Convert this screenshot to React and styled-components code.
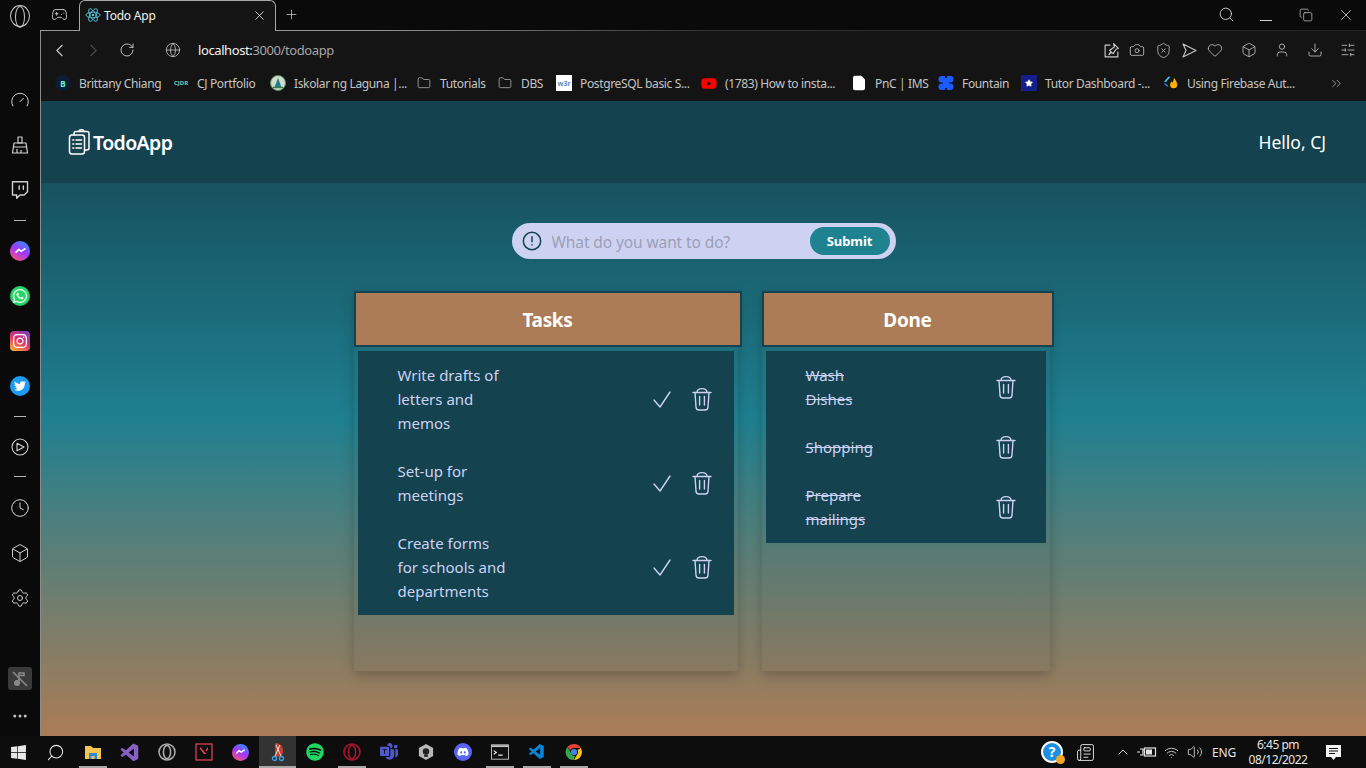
import React from 'react';
import styled, { createGlobalStyle } from 'styled-components';
import {
  ChevronLeft, ChevronRight, ChevronUp, ChevronsRight, RotateCw, Globe, Search, Copy, X, Plus,
  Gamepad2, Folder, Camera, ShieldX, Heart, Box, User, Download, SlidersHorizontal, Gauge, Twitch,
  Clock, Settings, Ellipsis, Volume2, Wifi, Newspaper, FileText,
} from 'lucide-react';
import { FaWhatsapp, FaTwitter, FaInstagram, FaWindows, FaDiscord, FaSpotify, FaYoutube, FaStar } from 'react-icons/fa';
import { BiLogoVisualStudio } from 'react-icons/bi';
import { VscVscode } from 'react-icons/vsc';
import { BsMicrosoftTeams } from 'react-icons/bs';

const GlobalStyle = createGlobalStyle`
  html, body { margin: 0; padding: 0; background: #0a0a0a; }
  * { box-sizing: border-box; }
  body { font-family: "Noto Sans", "Open Sans", sans-serif; overflow: hidden; }
`;

const Window = styled.div`
  width: 1366px;
  height: 768px;
  display: flex;
  flex-direction: column;
  overflow: hidden;
`;

const Workspace = styled.div`
  display: flex;
  flex: 1;
  min-height: 0;
`;

/* opera sidebar */
const Sidebar = styled.aside`
  width: 40px;
  flex: none;
  background: #0a0a0a;
  color: #d0d0d0;
  display: flex;
  flex-direction: column;
  align-items: center;
  padding: 5px 0 11px;
`;

const OperaMark = styled.div`
  width: 20px;
  height: 22px;
  border: 1.5px solid #c9c9c9;
  border-radius: 50%;
  margin-bottom: 50px;
  display: flex;
  justify-content: center;
  &::after {
    content: '';
    width: 8px;
    height: 100%;
    border: 1.5px solid #c9c9c9;
    border-radius: 50%;
  }
`;

const SideSlot = styled.div`
  width: 40px;
  height: 45px;
  flex: none;
  display: flex;
  align-items: center;
  justify-content: center;
`;

const SideDash = styled.div`
  width: 12px;
  height: 1px;
  background: #b5b5b5;
  margin: ${p => p.$top}px 0 ${p => p.$bottom}px;
  flex: none;
`;

const Badge = styled.div`
  width: ${p => p.$size || 20}px;
  height: ${p => p.$size || 20}px;
  border-radius: ${p => p.$radius || '50%'};
  background: ${p => p.$bg};
  color: #fff;
  display: flex;
  align-items: center;
  justify-content: center;
`;

const MuteTile = styled.div`
  width: 24px;
  height: 23px;
  margin-top: auto;
  margin-bottom: 17px;
  border-radius: 3px;
  background: #3a3a3a;
  color: #8a8a8a;
  display: flex;
  align-items: center;
  justify-content: center;
`;

const Browser = styled.div`
  flex: 1;
  min-width: 0;
  display: flex;
  flex-direction: column;
`;

const TabStrip = styled.div`
  height: 31px;
  flex: none;
  display: flex;
  align-items: stretch;
  background: #0a0a0a;
  color: #d0d0d0;
  border-bottom: 1px solid;
  border-image: linear-gradient(90deg, #999 0, #999 24%, #333 50%, #222 100%) 1;
`;

const StripButton = styled.div`
  width: ${p => p.$w || 40}px;
  flex: none;
  display: flex;
  align-items: center;
  justify-content: center;
  padding-bottom: 1px;
  margin-left: ${p => (p.$push ? 'auto' : 0)};
`;

const MinimizeLine = styled.span`
  width: 12px;
  height: 1px;
  margin-top: 11px;
  background: currentColor;
`;

const Tab = styled.div`
  width: 197px;
  height: 31px;
  flex: none;
  display: flex;
  align-items: center;
  padding: 0 8px 2px 5px;
  gap: 3px;
  background: #141414;
  border: 1px solid #a8a8a8;
  border-bottom: none;
  border-radius: 6px 6px 0 0;
  color: #f0f0f0;
  font-size: 12px;
  letter-spacing: -0.2px;
`;

const TabTitle = styled.span`
  flex: 1;
`;

const Body = styled.div`
  flex: 1;
  min-height: 0;
  display: flex;
  flex-direction: column;
  border-left: 1px solid #8c8c8c;
`;

const Toolbar = styled.div`
  height: 39px;
  flex: none;
  background: #141414;
  color: #c8c8c8;
  display: flex;
  align-items: center;
  padding: 0 2px 1px 1px;
`;

const ToolButton = styled.div`
  width: ${p => p.$w || 34}px;
  height: 34px;
  flex: none;
  display: flex;
  align-items: center;
  justify-content: center;
  color: ${p => (p.$dim ? '#4a4a4a' : 'inherit')};
  margin-left: ${p => p.$left || 0}px;
`;

const Address = styled.div`
  margin-left: 8px;
  padding-bottom: 1px;
  flex: 1;
  font-size: 13px;
  letter-spacing: -0.4px;
  color: #a6a6a6;
  b { font-weight: 400; color: #f2f2f2; }
`;

const Bookmarks = styled.div`
  height: 31px;
  flex: none;
  background: #141414;
  display: flex;
  align-items: center;
  gap: 13px;
  padding: 0 0 5px 14px;
  color: #c4c4c4;
`;

const Bookmark = styled.div`
  display: flex;
  align-items: center;
  gap: 8px;
  flex: none;
`;

const BookmarkIcon = styled.div`
  width: 16px;
  height: 16px;
  flex: none;
  display: flex;
  align-items: center;
  justify-content: center;
  color: ${p => p.$color || 'inherit'};
  background: ${p => p.$bg || 'none'};
  border-radius: ${p => p.$radius || 0};
  font-size: ${p => p.$font || 9}px;
  font-weight: 700;
`;

const BookmarkLabel = styled.span`
  width: ${p => p.$w}px;
  font-size: 12px;
  letter-spacing: -0.35px;
  white-space: nowrap;
`;

const BookmarkMore = styled.div`
  margin-left: auto;
  margin-right: 22px;
  display: flex;
  color: #bdbdbd;
`;

/* the todo page */
const Page = styled.main`
  flex: 1;
  min-height: 0;
  display: flex;
  flex-direction: column;
  background: linear-gradient(180deg, #14424f 0%, #1f8090 50%, #ab7c55 100%);
  color: #cdd2f3;
`;

const Nav = styled.nav`
  height: 82px;
  flex: none;
  background: #14424f;
  color: #fff;
  display: flex;
  align-items: center;
  justify-content: space-between;
  padding: 0 40px 0 27px;
`;

const Brand = styled.div`
  display: flex;
  align-items: center;
  font-size: 19.5px;
  font-weight: 600;
  letter-spacing: -0.6px;
`;

const Greeting = styled.div`
  font-size: 17.5px;
`;

const Content = styled.div`
  display: flex;
  flex-direction: column;
  align-items: center;
  padding-top: 40px;
  gap: 32px;
`;

const TodoForm = styled.form`
  width: 384px;
  height: 36px;
  border-radius: 18px;
  background: #cdd2f3;
  display: flex;
  align-items: center;
  padding: 0 6px 0 10px;
  color: #14424f;
`;

const TodoInput = styled.input`
  flex: 1;
  min-width: 0;
  margin: 1px 0 0 10px;
  border: none;
  outline: none;
  background: none;
  font: inherit;
  font-size: 15.5px;
  letter-spacing: -0.1px;
  padding: 0;
  &::placeholder { color: #9c9fb6; opacity: 1; }
`;

const SubmitButton = styled.button`
  width: 80px;
  height: 28px;
  border: none;
  border-radius: 14px;
  background: #1f8290;
  color: #fff;
  font: inherit;
  font-size: 13px;
  font-weight: 700;
  letter-spacing: -0.1px;
  padding: 0;
`;

const Board = styled.div`
  display: flex;
  gap: 24px;
  padding-right: 4px;
`;

const Column = styled.section`
  width: ${p => p.$w}px;
  height: 380px;
  flex: none;
  background: rgba(70, 70, 70, 0.06);
  box-shadow: 0 4px 12px rgba(0, 0, 0, 0.22);
`;

const ColumnTitle = styled.h2`
  width: ${p => p.$w + 4}px;
  height: 56px;
  margin: 0 0 4px;
  padding-top: 2px;
  background: #ab7c55;
  border: 2px solid #14424f;
  color: #fff;
  font-size: 19px;
  font-weight: 700;
  letter-spacing: -0.3px;
  display: flex;
  align-items: center;
  justify-content: center;
`;

const TodoList = styled.ul`
  list-style: none;
  margin: 0 4px;
  padding: 12px 0;
  background: #14424f;
  display: flex;
  flex-direction: column;
  gap: 24px;
`;

const TodoRow = styled.li`
  display: flex;
  align-items: center;
  padding: 0 ${p => p.$right}px 0 40px;
`;

const TodoText = styled.span`
  width: ${p => p.$w}px;
  flex: none;
  font-size: 15px;
  line-height: 24px;
  text-decoration: ${p => (p.$done ? 'line-through' : 'none')};
`;

const TodoActions = styled.div`
  margin-left: auto;
  display: flex;
  gap: 16px;
`;

/* windows taskbar */
const Taskbar = styled.footer`
  height: 32px;
  flex: none;
  background: #0d0d0d;
  display: flex;
  align-items: stretch;
  color: #e8e8e8;
`;

const TaskSlot = styled.div`
  width: 37px;
  flex: none;
  display: flex;
  align-items: center;
  justify-content: center;
  position: relative;
  background: ${p => (p.$active ? '#333' : 'none')};
  &::after {
    content: '';
    display: ${p => (p.$open ? 'block' : 'none')};
    position: absolute;
    bottom: 0;
    left: ${p => (p.$active ? 0 : 5)}px;
    right: ${p => (p.$active ? 0 : 4)}px;
    height: 2px;
    background: #a8a8a8;
  }
`;

const Tray = styled.div`
  margin-left: auto;
  display: flex;
  align-items: center;
  font-size: 12px;
  color: #e4e4e4;
`;

const TraySlot = styled.div`
  width: ${p => p.$w || 24}px;
  flex: none;
  display: flex;
  align-items: center;
  justify-content: center;
  margin-left: ${p => p.$left || 0}px;
`;

const HelpBadge = styled.div`
  width: 22px;
  height: 22px;
  position: relative;
  border-radius: 50%;
  border: 2px solid #fff;
  background: #1d8fe0;
  color: #fff;
  font-size: 14px;
  font-weight: 700;
  line-height: 18px;
  text-align: center;
`;

const HelpDot = styled.span`
  position: absolute;
  right: -4px;
  bottom: -3px;
  width: 9px;
  height: 9px;
  border-radius: 50%;
  background: #f5a623;
`;

const TrayClock = styled.div`
  width: 78px;
  text-align: center;
  line-height: 15px;
  letter-spacing: -0.5px;
`;

const TrayLang = styled.div`
  width: 30px;
  margin-left: 2px;
  text-align: center;
  letter-spacing: -0.2px;
`;

// drawings that the icon packages don't have

const TrashIcon = () => (
  <svg width="24" height="24" viewBox="0 0 24 24" fill="none" stroke="currentColor" strokeWidth="1.4" strokeLinecap="round" strokeLinejoin="round">
    <path d="M3 5.5h18" />
    <path d="M7 5.5C7 2.8 9 1.6 12 1.6s5 1.2 5 3.9" />
    <path d="M5 5.5l1 14.5a3 3 0 0 0 3 3h6a3 3 0 0 0 3-3l1-14.5" />
    <path d="M9.6 9.5v8.5M14.4 9.5v8.5" />
  </svg>
);

const CheckIcon = () => (
  <svg width="24" height="24" viewBox="0 0 24 24" fill="none" stroke="currentColor" strokeWidth="1.4" strokeLinecap="round" strokeLinejoin="round">
    <path d="M4 13l6 7L20 5" />
  </svg>
);

const LogoIcon = () => (
  <svg width="25" height="26" viewBox="0 0 25 26" fill="none" stroke="#fff" strokeWidth="1.5" strokeLinecap="round" strokeLinejoin="round">
    <rect x="1.5" y="6" width="15" height="19" rx="2.5" />
    <path d="M6 6V4.5a2 2 0 0 1 2-2h11a2 2 0 0 1 2 2V19a2 2 0 0 1-2 2h-2.5" />
    <path d="M11 2.5a2.5 1.8 0 0 1 5 0" />
    <path d="M4.8 11h1M8 11h5.5M4.8 15h1M8 15h5.5M4.8 19h1M8 19h5.5" />
  </svg>
);

const AlertIcon = () => (
  <svg width="20" height="20" viewBox="0 0 20 20" fill="none" stroke="currentColor" strokeWidth="1.5" strokeLinecap="round">
    <circle cx="10" cy="10" r="8.7" />
    <path d="M10 5.8v5" />
    <path d="M10 13.8v.2" />
  </svg>
);

const Bolt = ({ size = 12 }) => (
  <svg width={size} height={size} viewBox="0 0 12 12" fill="none" stroke="#fff" strokeWidth="1.6" strokeLinejoin="round">
    <path d="M1.5 8l3-3 2.2 1.8L10.5 4" />
  </svg>
);

const Messenger = ({ size = 20 }) => (
  <Badge $size={size} $bg="linear-gradient(30deg, #ff5a6e 5%, #a334fa 50%, #1e9bff 95%)">
    <Bolt size={size * 0.65} />
  </Badge>
);

const PlayerIcon = () => (
  <svg width="18" height="18" viewBox="0 0 18 18" fill="none" stroke="currentColor" strokeWidth="1.1" strokeLinejoin="round">
    <circle cx="9" cy="9" r="8" />
    <path d="M6 5.2l7 3.8-7 3.8z" />
  </svg>
);

const BrushIcon = () => (
  <svg width="18" height="20" viewBox="0 0 18 20" fill="none" stroke="currentColor" strokeWidth="1.2" strokeLinejoin="round">
    <path d="M7 2h4v6H7z" />
    <path d="M3 8h12l1.5 10h-15z" />
    <path d="M2 12h14M6 14v4M10 15v3" />
  </svg>
);

const MutedIcon = () => (
  <svg width="18" height="18" viewBox="0 0 18 18" fill="currentColor" stroke="currentColor">
    <circle cx="6" cy="13" r="3" stroke="none" />
    <path d="M8 13V3h5v2.5H9" fill="none" strokeWidth="1.6" />
    <path d="M2 2l14 14" strokeWidth="1.6" />
  </svg>
);

const PinBoxIcon = () => (
  <svg width="17" height="17" viewBox="0 0 16 16" fill="none" stroke="currentColor" strokeWidth="1.1" strokeLinejoin="round">
    <path d="M7 3H2v11h12V9" />
    <path d="M10 1.5l4.5 4.5-2 .6L9.5 11 8.2 9.8 5.5 12l2-3-1.2-1.2 4.4-3z" />
  </svg>
);

const SendIcon = () => (
  <svg width="17" height="17" viewBox="0 0 17 17" fill="none" stroke="currentColor" strokeWidth="1.1" strokeLinejoin="round">
    <path d="M2 2l13 6.5L2 15l3-6.5z" />
  </svg>
);

const FountainIcon = () => (
  <svg width="16" height="16" viewBox="0 0 16 16" fill="#1a5cff">
    <rect x="0.5" y="1" width="15" height="6.5" rx="3.2" />
    <rect x="0.5" y="8.5" width="15" height="6.5" rx="3.2" />
    <path d="M5 6h6v4H5z" />
    <path d="M7 0.5h2v2.5H7zM7 13h2v2.5H7z" fill="#141414" />
  </svg>
);

const FirebaseIcon = () => (
  <svg width="18" height="16" viewBox="0 0 18 16">
    <path d="M6 1h2.4L3.4 7 1 7z" fill="#40c4ff" />
    <path d="M1 8.5h2.4l3 3.5H4z" fill="#2a7fd6" />
    <path d="M12.5 2c1 2.5 3.5 4 3.5 8a4 4 0 0 1-8 0c0-2 1-3 2-4 .3 1 .6 1.5 1 1.7.5-2 .8-3.7 1.5-5.7z" fill="#ffb300" />
  </svg>
);

const SealIcon = () => (
  <svg width="16" height="16" viewBox="0 0 16 16">
    <circle cx="8" cy="8" r="7.5" fill="#cfdccb" stroke="#5d8c66" />
    <path d="M8 3l3.4 9H4.6z" fill="#1f7f8c" />
    <path d="M3 12.5h10" stroke="#3d7a4a" strokeWidth="1.4" />
  </svg>
);

const Chrome = () => (
  <svg width="18" height="18" viewBox="0 0 18 18">
    <path d="M9 1a8 8 0 0 1 6.9 4H9a4 4 0 0 0-3.7 2.4L2.4 4A8 8 0 0 1 9 1z" fill="#e34133" />
    <path d="M15.9 5A8 8 0 0 1 9 17l3.4-6A4 4 0 0 0 12.5 7z" fill="#fbc116" />
    <path d="M2.4 4l3.5 6A4 4 0 0 0 10 12.9L8.6 17A8 8 0 0 1 2.4 4z" fill="#2fa84f" />
    <circle cx="9" cy="9" r="3.1" fill="#3f86f4" />
  </svg>
);

const FolderYellow = () => (
  <svg width="18" height="17" viewBox="0 0 18 17">
    <path d="M1 2h6l2 2h8v11H1z" fill="#f4c64f" />
    <path d="M5 9h8v6h-2.5v-3h-3v3H5z" fill="#2f88d8" />
  </svg>
);

const Snip = () => (
  <svg width="16" height="20" viewBox="0 0 16 20" fill="none">
    <path d="M5 1c5 0 8 3 8 8s-3 6-8 6z" fill="#c9402d" />
    <path d="M6 3l5 11M10 3L5 14" stroke="#e8e8e8" strokeWidth="1" />
    <circle cx="4.5" cy="16.5" r="2" stroke="#3aa3e8" strokeWidth="1.3" />
    <circle cx="11.5" cy="16.5" r="2" stroke="#3aa3e8" strokeWidth="1.3" />
  </svg>
);

const Valorant = () => (
  <svg width="18" height="18" viewBox="0 0 18 18" fill="none">
    <rect x="1" y="1" width="16" height="16" stroke="#e8455a" strokeWidth="1.2" />
    <path d="M5 6l4 5h2.5L5 4zM13 4l-2.5 3.4 1 1L13 6.5z" fill="#e8455a" />
  </svg>
);

const CubeLogo = () => (
  <svg width="16" height="18" viewBox="0 0 18 20">
    <path d="M9 1l8 4.5v9L9 19l-8-4.5v-9z" fill="#b8b8b8" />
    <circle cx="9" cy="9.5" r="3.6" fill="#222" />
    <path d="M7 13h4v2.5H7z" fill="#222" />
  </svg>
);

const Cmd = () => (
  <svg width="18" height="16" viewBox="0 0 20 17" fill="none">
    <rect x="0.5" y="0.5" width="19" height="16" fill="#111" stroke="#c8c8c8" />
    <path d="M1 1h18v2H1z" fill="#c8c8c8" />
    <path d="M3 7l3 2-3 2M8 12h5" stroke="#e8e8e8" strokeWidth="1.2" />
  </svg>
);

const Notice = () => (
  <svg width="17" height="17" viewBox="0 0 17 17">
    <path d="M1 1h15v12h-5l-2.5 3L6 13H1z" fill="#f2f2f2" />
    <path d="M4 4.5h9M4 7h9M4 9.5h6" stroke="#0d0d0d" strokeWidth="1" />
  </svg>
);

const Battery = () => (
  <svg width="20" height="14" viewBox="0 0 20 14" fill="none" stroke="#e4e4e4" strokeWidth="1.2">
    <path d="M0 7h3M3 4h3v6H3M6 5h1" />
    <rect x="7.5" y="3" width="11" height="8" />
    <rect x="9" y="4.5" width="6" height="5" fill="#e4e4e4" stroke="none" />
  </svg>
);

function OperaGlyph({ color }) {
  return (
    <svg width="18" height="18" viewBox="0 0 18 18" fill="none" stroke={color} strokeWidth="1.6">
      <ellipse cx="9" cy="9" rx="8" ry="8" />
      <ellipse cx="9" cy="9" rx="3.6" ry="6.6" />
    </svg>
  );
}

const tasks = ['Write drafts of letters and memos', 'Set-up for meetings', 'Create forms for schools and departments'];
const done = ['Wash Dishes', 'Shopping', 'Prepare mailings'];

const bookmarks = [
  { label: 'Brittany Chiang', w: 81, icon: <BookmarkIcon $bg="#0b1c33" $color="#64ffda" $radius="50%" $font={8}>B</BookmarkIcon> },
  { label: 'CJ Portfolio', w: 60, icon: <BookmarkIcon $color="#7fc8a9" $font={6}>CJDR</BookmarkIcon> },
  { label: 'Iskolar ng Laguna |...', w: 109, icon: <SealIcon /> },
  { label: 'Tutorials', w: 44, icon: <BookmarkIcon><Folder size={14} strokeWidth={1.2} /></BookmarkIcon> },
  { label: 'DBS', w: 22, icon: <BookmarkIcon><Folder size={14} strokeWidth={1.2} /></BookmarkIcon> },
  { label: 'PostgreSQL basic S...', w: 108, icon: <BookmarkIcon $bg="#fff" $color="#5a8fc4" $font={7}>w3r</BookmarkIcon> },
  { label: '(1783) How to insta...', w: 113, icon: <BookmarkIcon $color="#f00"><FaYoutube size={17} /></BookmarkIcon> },
  { label: 'PnC | IMS', w: 50, icon: <BookmarkIcon $color="#fff"><FileText size={16} fill="#fff" stroke="#fff" /></BookmarkIcon> },
  { label: 'Fountain', w: 46, icon: <FountainIcon /> },
  { label: 'Tutor Dashboard -...', w: 105, icon: <BookmarkIcon $bg="#14208a" $color="#fff"><FaStar size={8} /></BookmarkIcon> },
  { label: 'Using Firebase Aut...', w: 108, icon: <BookmarkIcon><FirebaseIcon /></BookmarkIcon> },
];

const taskApps = [
  { key: 'files', icon: <FolderYellow />, open: true },
  { key: 'vs', icon: <BiLogoVisualStudio size={21} color="#8661c5" /> },
  { key: 'opera', icon: <OperaGlyph color="#a8a8a8" /> },
  { key: 'valorant', icon: <Valorant /> },
  { key: 'messenger', icon: <Messenger size={17} /> },
  { key: 'snip', icon: <Snip />, open: true, active: true },
  { key: 'spotify', icon: <FaSpotify size={18} color="#1ed760" /> },
  { key: 'operagx', icon: <OperaGlyph color="#a3162f" />, open: true },
  { key: 'teams', icon: <BsMicrosoftTeams size={18} color="#5059c9" /> },
  { key: 'cube', icon: <CubeLogo /> },
  { key: 'discord', icon: <Badge $size={18} $bg="#5865f2"><FaDiscord size={12} /></Badge> },
  { key: 'cmd', icon: <Cmd />, open: true },
  { key: 'vscode', icon: <VscVscode size={18} color="#0a84d6" />, open: true },
  { key: 'chrome', icon: <Chrome />, open: true },
];

export default function App() {
  return (
    <Window>
      <GlobalStyle />
      <Workspace>
        <Sidebar>
          <OperaMark />
          <SideSlot><Gauge size={20} strokeWidth={1.2} /></SideSlot>
          <SideSlot><BrushIcon /></SideSlot>
          <SideSlot><Twitch size={20} strokeWidth={1.7} /></SideSlot>
          <SideDash $top={8} $bottom={7} />
          <SideSlot><Messenger /></SideSlot>
          <SideSlot><Badge $bg="#25d366"><FaWhatsapp size={16} /></Badge></SideSlot>
          <SideSlot><Badge $radius="4px" $bg="linear-gradient(30deg, #f9a13a 10%, #e1306c 50%, #7a3fc4 95%)"><FaInstagram size={16} /></Badge></SideSlot>
          <SideSlot><Badge $bg="#1d9bf0"><FaTwitter size={12} /></Badge></SideSlot>
          <SideDash $top={8} $bottom={7} />
          <SideSlot><PlayerIcon /></SideSlot>
          <SideDash $top={7} $bottom={8} />
          <SideSlot><Clock size={20} strokeWidth={1.2} /></SideSlot>
          <SideSlot><Box size={20} strokeWidth={1.2} /></SideSlot>
          <SideSlot><Settings size={20} strokeWidth={1.2} /></SideSlot>
          <MuteTile><MutedIcon /></MuteTile>
          <Ellipsis size={18} color="#bdbdbd" />
        </Sidebar>

        <Browser>
          <TabStrip>
            <StripButton $w={39}><Gamepad2 size={17} strokeWidth={1.3} /></StripButton>
            <Tab>
              <svg width="16" height="16" viewBox="0 0 18 18" fill="none" stroke="#58c4dc" strokeWidth="1">
                <ellipse cx="9" cy="9" rx="8" ry="3.2" />
                <ellipse cx="9" cy="9" rx="8" ry="3.2" transform="rotate(60 9 9)" />
                <ellipse cx="9" cy="9" rx="8" ry="3.2" transform="rotate(120 9 9)" />
                <circle cx="9" cy="9" r="1.4" fill="#58c4dc" stroke="none" />
              </svg>
              <TabTitle>Todo App</TabTitle>
              <X size={15} strokeWidth={1.3} />
            </Tab>
            <StripButton $w={30}><Plus size={15} strokeWidth={1.2} /></StripButton>
            <StripButton $push><Search size={17} strokeWidth={1.3} /></StripButton>
            <StripButton><MinimizeLine /></StripButton>
            <StripButton><Copy size={14} strokeWidth={1.2} /></StripButton>
            <StripButton><X size={18} strokeWidth={1.1} /></StripButton>
          </TabStrip>

          <Body>
            <Toolbar>
              <ToolButton><ChevronLeft size={21} strokeWidth={1.3} /></ToolButton>
              <ToolButton $dim><ChevronRight size={21} strokeWidth={1.3} /></ToolButton>
              <ToolButton><RotateCw size={16} strokeWidth={1.4} /></ToolButton>
              <ToolButton $left={12}><Globe size={16} strokeWidth={1.2} /></ToolButton>
              <Address><b>localhost:</b>3000/todoapp</Address>
              <ToolButton $w={26}><PinBoxIcon /></ToolButton>
              <ToolButton $w={26}><Camera size={16} strokeWidth={1.2} /></ToolButton>
              <ToolButton $w={26}><ShieldX size={17} strokeWidth={1.1} /></ToolButton>
              <ToolButton $w={26}><SendIcon /></ToolButton>
              <ToolButton $w={26}><Heart size={16} strokeWidth={1.2} /></ToolButton>
              <ToolButton $w={33} $left={4}><Box size={16} strokeWidth={1.2} /></ToolButton>
              <ToolButton $w={33}><User size={16} strokeWidth={1.2} /></ToolButton>
              <ToolButton $w={33}><Download size={16} strokeWidth={1.2} /></ToolButton>
              <ToolButton $w={33}><SlidersHorizontal size={16} strokeWidth={1.2} /></ToolButton>
            </Toolbar>

            <Bookmarks>
              {bookmarks.map(b => (
                <Bookmark key={b.label}>
                  {b.icon}
                  <BookmarkLabel $w={b.w}>{b.label}</BookmarkLabel>
                </Bookmark>
              ))}
              <BookmarkMore><ChevronsRight size={15} strokeWidth={1.2} /></BookmarkMore>
            </Bookmarks>

            <Page>
              <Nav>
                <Brand><LogoIcon />TodoApp</Brand>
                <Greeting>Hello, CJ</Greeting>
              </Nav>
              <Content>
                <TodoForm onSubmit={e => e.preventDefault()}>
                  <AlertIcon />
                  <TodoInput placeholder="What do you want to do?" />
                  <SubmitButton type="submit">Submit</SubmitButton>
                </TodoForm>
                <Board>
                  <Column $w={384}>
                    <ColumnTitle $w={384}>Tasks</ColumnTitle>
                    <TodoList>
                      {tasks.map(t => (
                        <TodoRow key={t} $right={20}>
                          <TodoText $w={110}>{t}</TodoText>
                          <TodoActions>
                            <CheckIcon />
                            <TrashIcon />
                          </TodoActions>
                        </TodoRow>
                      ))}
                    </TodoList>
                  </Column>
                  <Column $w={288}>
                    <ColumnTitle $w={288}>Done</ColumnTitle>
                    <TodoList>
                      {done.map(t => (
                        <TodoRow key={t} $right={28}>
                          <TodoText $w={80} $done>{t}</TodoText>
                          <TodoActions>
                            <TrashIcon />
                          </TodoActions>
                        </TodoRow>
                      ))}
                    </TodoList>
                  </Column>
                </Board>
              </Content>
            </Page>
          </Body>
        </Browser>
      </Workspace>

      <Taskbar>
        <TaskSlot><FaWindows size={17} /></TaskSlot>
        <TaskSlot><Search size={19} strokeWidth={1.3} style={{ transform: 'scaleX(-1)' }} /></TaskSlot>
        {taskApps.map(a => (
          <TaskSlot key={a.key} $open={a.open} $active={a.active}>{a.icon}</TaskSlot>
        ))}
        <Tray>
          <TraySlot $w={26}>
            <HelpBadge>?<HelpDot /></HelpBadge>
          </TraySlot>
          <TraySlot $w={24} $left={8}><Newspaper size={19} strokeWidth={1.2} /></TraySlot>
          <TraySlot $w={24} $left={14}><ChevronUp size={16} strokeWidth={1.4} /></TraySlot>
          <TraySlot $w={24}><Battery /></TraySlot>
          <TraySlot $w={24}><Wifi size={15} strokeWidth={1.3} /></TraySlot>
          <TraySlot $w={24}><Volume2 size={16} strokeWidth={1.2} /></TraySlot>
          <TrayLang>ENG</TrayLang>
          <TrayClock>6:45 pm<br />08/12/2022</TrayClock>
          <TraySlot $w={32}><Notice /></TraySlot>
          <TraySlot $w={17} />
        </Tray>
      </Taskbar>
    </Window>
  );
}
